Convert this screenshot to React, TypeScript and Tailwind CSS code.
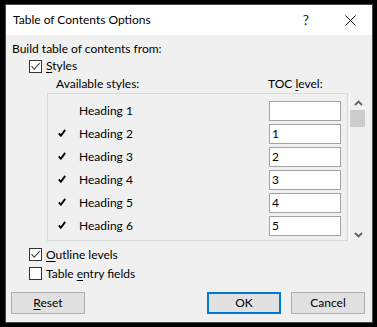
import React from "react";

const BoxCheck = () => (
  <svg width="11" height="11" viewBox="0 0 11 11" className="block">
    <path d="M1.5 5.2 L4.2 8.2 L9.8 2.2" fill="none" stroke="#444" strokeWidth="1.1" />
  </svg>
);

function CheckBox({ checked }: { checked: boolean }) {
  return (
    <div className="w-[13px] h-[13px] border border-[#333] bg-white flex items-center justify-center shrink-0">
      {checked && <BoxCheck />}
    </div>
  );
}

const TickMark = () => (
  <svg width="8" height="8" viewBox="0 0 8 8" className="block">
    <path d="M0.8 4.4 L2.9 6.8 L7.2 0.9" fill="none" stroke="#000" strokeWidth="1.9" strokeLinejoin="round" />
  </svg>
);

const rows = [
  { name: "Heading 1", checked: false, level: "" },
  { name: "Heading 2", checked: true, level: "1" },
  { name: "Heading 3", checked: true, level: "2" },
  { name: "Heading 4", checked: true, level: "3" },
  { name: "Heading 5", checked: true, level: "4" },
  { name: "Heading 6", checked: true, level: "5" },
];

export default function App() {
  return (
    <div className="w-[377px] h-[327px] bg-black pt-[4px] pl-[5px] font-['Lato','Segoe_UI',sans-serif] text-[12px] text-black leading-none">
      <div className="w-[368px] h-[319px] border border-[#4a4a4a] flex flex-col bg-[#f0f0f0]">
        {/* Title bar */}
        <div className="h-[30px] bg-white flex items-center pl-[7px] shrink-0">
          <span>Table of Contents Options</span>
          <div className="flex-1" />
          <span className="w-[10px] text-center text-[14px] text-[#222]">?</span>
          <svg width="11" height="11" viewBox="0 0 11 11" className="ml-[34px] mr-[16px] block">
            <path d="M0.5 0.5 L10.5 10.5 M10.5 0.5 L0.5 10.5" stroke="#111" strokeWidth="1" />
          </svg>
        </div>

        {/* Body */}
        <div className="flex-1 flex flex-col pt-[6px] pl-[6px]">
          <div className="h-[16px] flex items-center">Build table of contents from:</div>

          <div className="h-[14px] mt-[2px] flex items-center pl-[17px]">
            <CheckBox checked />
            <span className="ml-[4px]">
              <u className="underline-offset-2">S</u>tyles
            </span>
          </div>

          <div className="h-[16px] mt-[3px] flex items-center pl-[44px]">
            <span className="w-[212px]">Available styles:</span>
            <span>
              TOC <u className="underline-offset-2">l</u>evel:
            </span>
          </div>

          <div className="flex mt-[1px] pl-[35px]">
            <div className="w-[301px] border border-[#d9d9d9] pt-[7px] pb-[4px] flex flex-col gap-[3px]">
              {rows.map((r) => (
                <div key={r.name} className="h-[20px] flex items-center">
                  <div className="w-[31px] pl-[10px] flex items-center -mt-[3px]">
                    {r.checked && <TickMark />}
                  </div>
                  <span className="flex-1">{r.name}</span>
                  <div className="w-[72px] h-[20px] border border-[#a3a3a3] bg-white mr-[6px] flex items-center pl-[2px]">
                    {r.level}
                  </div>
                </div>
              ))}
            </div>
            <div className="ml-[1px] w-[17px] border-l border-white flex flex-col items-start">
              <svg width="9" height="6" viewBox="0 0 9 6" className="block mt-[7px] ml-[4px]">
                <path d="M1 5 L4.5 1.5 L8 5" fill="none" stroke="#606060" strokeWidth="1.8" />
              </svg>
              <div className="w-[15px] h-[17px] bg-[#cdcdcd] mt-[4px]" />
              <div className="flex-1" />
              <svg width="9" height="6" viewBox="0 0 9 6" className="block mb-[3px] ml-[4px]">
                <path d="M1 1 L4.5 4.5 L8 1" fill="none" stroke="#606060" strokeWidth="1.8" />
              </svg>
            </div>
          </div>

          <div className="h-[13px] mt-[7px] flex items-center pl-[17px]">
            <CheckBox checked />
            <span className="ml-[4px]">
              <u className="underline-offset-2">O</u>utline levels
            </span>
          </div>
          <div className="h-[13px] mt-[6px] flex items-center pl-[17px]">
            <CheckBox checked={false} />
            <span className="ml-[4px]">
              Table <u className="underline-offset-2">e</u>ntry fields
            </span>
          </div>

          <div className="flex mt-[12px] pl-[-1px] -ml-[1px]">
            <div className="w-[74px] h-[22px] bg-[#e1e1e1] border border-[#adadad] flex items-center justify-center">
              <span>
                <u className="underline-offset-2">R</u>eset
              </span>
            </div>
            <div className="flex-1" />
            <div className="w-[74px] h-[22px] bg-[#e1e1e1] border-2 border-[#0078d7] flex items-center justify-center">
              OK
            </div>
            <div className="w-[74px] h-[22px] bg-[#e1e1e1] border border-[#adadad] flex items-center justify-center ml-[10px] mr-[7px]">
              Cancel
            </div>
          </div>
        </div>
      </div>
    </div>
  );
}
